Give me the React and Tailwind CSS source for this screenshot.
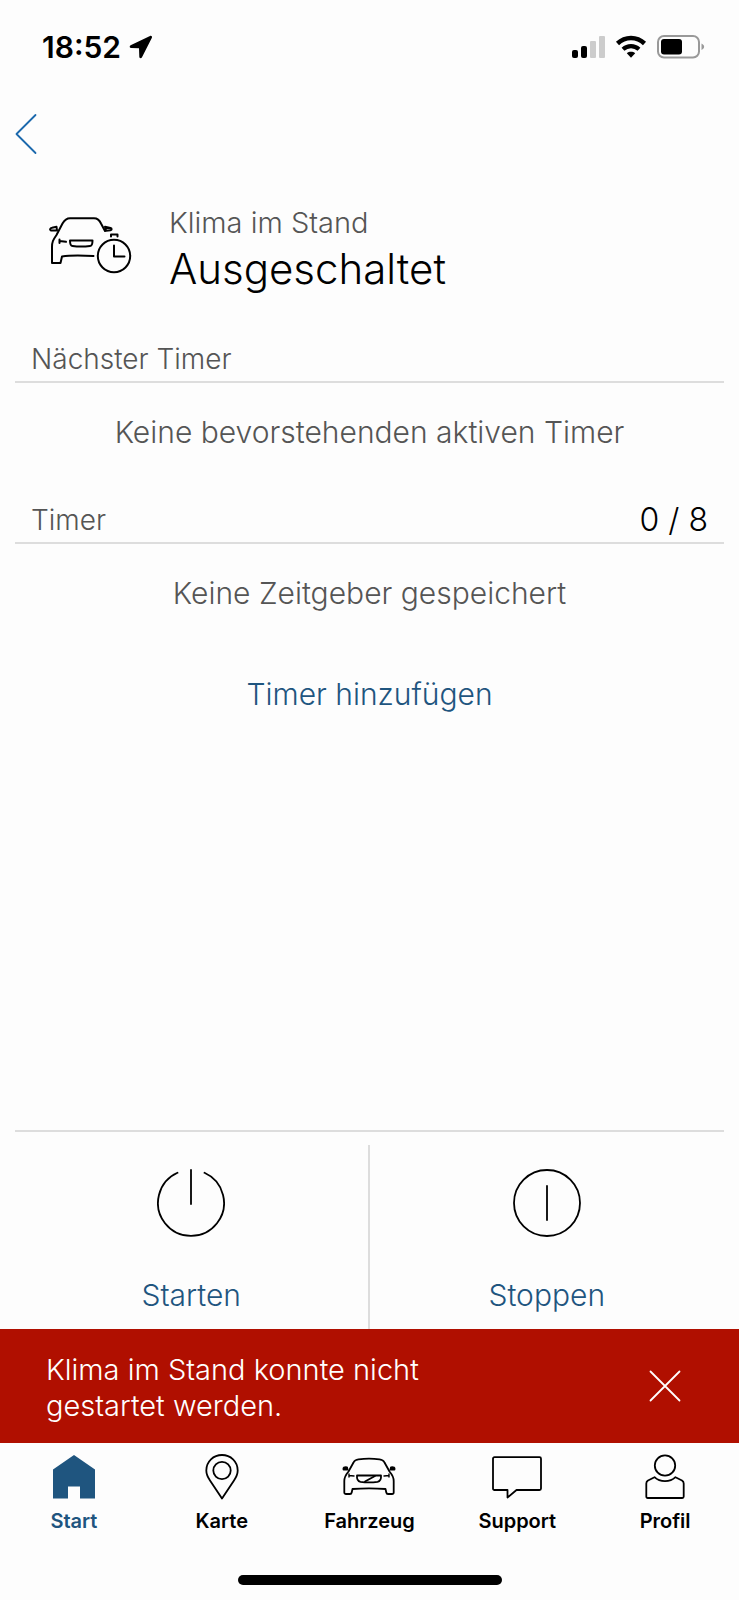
import { useState } from "react";

const svgProps = {
  fill: "none",
  stroke: "currentColor",
  strokeLinecap: "round",
  strokeLinejoin: "round",
  "aria-hidden": true,
};

function StatusBar() {
  return (
    <div className="h-[94px] pl-[42px] pr-[34px] flex items-center justify-between">
      <div className="flex items-center gap-2 text-[30px] leading-10 font-semibold">
        <span>18:52</span>
        <svg width="24" height="24" viewBox="0 0 24 24" fill="currentColor" aria-hidden="true">
          <path d="M21 .9 1.6 10.2C.2 11 .5 13 2.200 13L10 13.200l.3 8.500c0 1.700 2 2 2.700.5L22.900 2.700C23.400 1.400 22.300.4 21 .9Z" />
        </svg>
      </div>
      <div className="flex items-center gap-[10px]">
        <svg width="34" height="24" viewBox="0 0 34 24" aria-hidden="true">
          <rect x="1" y="15" width="6" height="8" rx="2" fill="#000" />
          <rect x="10" y="11" width="6" height="12" rx="2" fill="#000" />
          <rect x="19" y="6" width="6" height="17" rx="1" fill="#ccc" />
          <rect x="28" y="1" width="6" height="22" rx="1" fill="#ccc" />
        </svg>
        <svg width="32" height="24" viewBox="0 0 32 24" aria-hidden="true">
          <path d="M2.5 8.5C10.2 1.2 21.8 1.2 29.5 8.5" fill="none" stroke="#000" strokeWidth="4.5" />
          <path d="M8 14.2C12.7 10 19.3 10 24 14.2" fill="none" stroke="#000" strokeWidth="4.2" />
          <path d="M11.8 18.2C14.2 16.3 17.8 16.3 20.2 18.2L16 22.8Z" fill="#000" />
        </svg>
        <svg width="48" height="24" viewBox="0 0 48 24" aria-hidden="true">
          <rect x="1" y="1" width="41" height="21.5" rx="6" fill="none" stroke="#999" strokeWidth="2" />
          <rect x="4" y="4" width="21" height="15.5" rx="3" fill="#000" />
          <path d="M44.5 8.5C48 10 48 13.5 44.5 15Z" fill="#999" />
        </svg>
      </div>
    </div>
  );
}

function ClimateIcon() {
  return (
    <svg {...svgProps} width="84" height="60" viewBox="0 0 84 60" strokeWidth="2">
      <path d="M56 15 52 7.5C50.5 4 48.5 2.200 45 2.200H21C17.5 2.200 15.5 4 13.5 7.5L7.5 19C4 24 3 26 3 31V47H11.5L13 40.5C22 39 36 39.5 44.5 40" />
      <path d="M8 14.500H2C.5 14 1 12 3 11.700L7.500 10.800Z" />
      <path d="M56 10.800 61.500 12C63 12.500 63 14 61.500 14.200L57 14.800Z" />
      <path d="M21 24.500H43.500C43.500 28 43 30 41 30C35 30.700 29 30.700 23.500 30C21.500 30 21 28 21 24.500Z" />
      <path d="M10.500 23.500V27M10.500 25 17 25.800" />
      <circle cx="65" cy="40" r="16.200" />
      <path d="M65 29.500V40.500H75.500M62 20.500V18.500H68.500V20.500" />
    </svg>
  );
}

function HomeIcon() {
  return (
    <svg width="42" height="44" viewBox="0 0 42 44" fill="currentColor" aria-hidden="true">
      <path d="M21 0 42 14.5V43.5H27V31.5H15V43.5H0V14.5Z" />
    </svg>
  );
}

function PinIcon() {
  return (
    <svg {...svgProps} width="34" height="46" viewBox="0 0 34 46" strokeWidth="1.8">
      <path d="M17 44.5 5 26.5C2.5 22.8 1.3 20 1.3 16.5C1.3 7.5 8.5 1 17 1S32.7 7.5 32.7 16.5C32.7 20 31.5 22.8 29 26.5Z" />
      <circle cx="17" cy="16.5" r="8.7" />
    </svg>
  );
}

function CarIcon() {
  return (
    <svg {...svgProps} width="54" height="40" viewBox="0 0 54 40" strokeWidth="1.8">
      <path d="M6.5 14.5 11.5 5.5C12.5 3.3 14 2.6 16.5 2.3C23.5 1.4 30.5 1.4 37.5 2.3C40 2.6 41.5 3.3 42.5 5.5L47.5 14.5C50.5 18 51.7 20 51.7 24V35.5C51.7 36.5 51 37 50 37H46C45 37 44.500 36.500 44.300 35.500L43.500 32C32 31 22 31 10.500 32L9.700 35.500C9.500 36.500 9 37 8 37H4C3 37 2.300 36.500 2.300 35.500V24C2.300 20 3.500 18 6.500 14.500Z" />
      <path d="M5.500 12.500H1.500C1 10.500 2 10 5 10.300ZM48.500 12.500H52.500C53 10.500 52 10 49 10.300Z" fill="currentColor" />
      <path d="M15 18.500H39C39.300 22 38 24.300 35.500 24.800C30 25.500 24 25.500 18.500 24.800C16 24.300 14.700 22 15 18.500Z" />
      <path d="M23 24.500 33 19" />
      <path d="M7 17V20M7 18.500 12 19M47 17V20M47 18.500 42 19" strokeWidth="1.400" />
    </svg>
  );
}

function ChatIcon() {
  return (
    <svg {...svgProps} width="50" height="43" viewBox="0 0 50 43" strokeWidth="1.8">
      <path d="M2.5 1.2H47.5C48.4 1.2 49 1.8 49 2.7V32.5C49 33.4 48.4 34 47.5 34H24.5L15.5 41.5V34H2.5C1.6 34 1 33.4 1 32.5V2.7C1 1.8 1.6 1.2 2.5 1.2Z" />
    </svg>
  );
}

function ProfileIcon() {
  return (
    <svg {...svgProps} width="40" height="46" viewBox="0 0 40 46" strokeWidth="1.8">
      <circle cx="20" cy="11.5" r="10.2" />
      <path d="M9.5 23.2C15 28.5 25 28.5 30.5 23.2L37 26.5C38.3 27.3 38.7 28 38.7 29.5V42.5C38.7 43.6 38.2 44 37.3 44H2.7C1.8 44 1.3 43.6 1.3 42.5V29.5C1.3 28 1.7 27.3 3 26.5Z" />
    </svg>
  );
}

const tabs = [
  { label: "Start", Icon: HomeIcon },
  { label: "Karte", Icon: PinIcon },
  { label: "Fahrzeug", Icon: CarIcon },
  { label: "Support", Icon: ChatIcon },
  { label: "Profil", Icon: ProfileIcon },
];

export default function App() {
  const [active, setActive] = useState("Start");
  const [showError, setShowError] = useState(true);

  return (
    <div className="min-h-screen flex flex-col bg-[#fdfdfd] text-black font-['Inter',sans-serif]">
      <StatusBar />

      <div className="h-20 px-[15px] flex items-center">
        <button aria-label="Zurück" className="text-[#1c69ad]">
          <svg {...svgProps} width="22" height="42" viewBox="0 0 22 42" strokeWidth="1.8">
            <path d="M20.5 2 1.5 21 20.5 40" />
          </svg>
        </button>
      </div>

      <header className="pt-[29px] pl-[49px] flex items-start gap-9">
        <div className="pt-[13px]">
          <ClimateIcon />
        </div>
        <div className="font-light">
          <p className="text-[29px] leading-10 text-[#555]">Klima im Stand</p>
          <h1 className="text-[42px] leading-[52px]">Ausgeschaltet</h1>
        </div>
      </header>

      <main className="flex-1 px-[15px] flex flex-col font-light text-[#555]">
        <h2 className="mt-10 h-12 px-4 pt-px flex items-center border-b-2 border-[#ddd] text-[28px]">Nächster Timer</h2>
        <p className="mt-[29px] text-center text-[30px] leading-10">Keine bevorstehenden aktiven Timer</p>

        <div className="mt-11 h-12 px-4 pt-[2px] flex items-center justify-between border-b-2 border-[#ddd]">
          <h2 className="text-[28px]">Timer</h2>
          <span className="text-[32px] text-black">0 / 8</span>
        </div>
        <p className="mt-[29px] text-center text-[30px] leading-10">Keine Zeitgeber gespeichert</p>

        <button className="mt-[61px] self-center text-[30px] leading-10 text-[#1f557f]">Timer hinzufügen</button>
      </main>

      <div className="mx-[15px] pt-[13px] border-t-2 border-[#ddd] grid grid-cols-2 font-light text-[30px] leading-10">
        <button className="h-[184px] pt-6 flex flex-col items-center gap-[38px] border-r-2 border-[#ddd] text-[#1f557f]">
          <svg {...svgProps} width="68" height="68" viewBox="0 0 68 68" strokeWidth="1.8" className="text-black">
            <path d="M20.5 3.800A33 33 0 1 0 47.500 3.800M34 1V35" />
          </svg>
          Starten
        </button>
        <button className="h-[184px] pt-6 flex flex-col items-center gap-[38px] text-[#1f557f]">
          <svg {...svgProps} width="68" height="68" viewBox="0 0 68 68" strokeWidth="1.8" className="text-black">
            <circle cx="34" cy="34" r="33" />
            <path d="M34 17V51" />
          </svg>
          Stoppen
        </button>
      </div>

      {showError && (
        <div role="alert" className="h-[114px] pl-[46px] pr-[58px] flex items-center justify-between bg-[#b00f00] text-white">
          <p className="max-w-[400px] pt-1 text-[29px] leading-9 font-light">Klima im Stand konnte nicht gestartet werden.</p>
          <button aria-label="Schließen" onClick={() => setShowError(false)}>
            <svg {...svgProps} width="32" height="32" viewBox="0 0 32 32" strokeWidth="1.8">
              <path d="M1.5 1.5 30.5 30.5M30.5 1.5 1.5 30.5" />
            </svg>
          </button>
        </div>
      )}

      <nav className="grid grid-cols-5 pt-[10px]">
        {tabs.map(({ label, Icon }) => (
          <button
            key={label}
            onClick={() => setActive(label)}
            className={`flex flex-col items-center gap-[6px] text-[20px] leading-7 font-semibold ${
              active === label ? "text-[#1f557f]" : "text-black"
            }`}
          >
            <span className="h-12 flex items-center">
              <Icon />
            </span>
            {label}
          </button>
        ))}
      </nav>

      <div className="h-[65px] pt-10 flex justify-center">
        <div className="w-[264px] h-[10px] rounded-full bg-black" />
      </div>
    </div>
  );
}
